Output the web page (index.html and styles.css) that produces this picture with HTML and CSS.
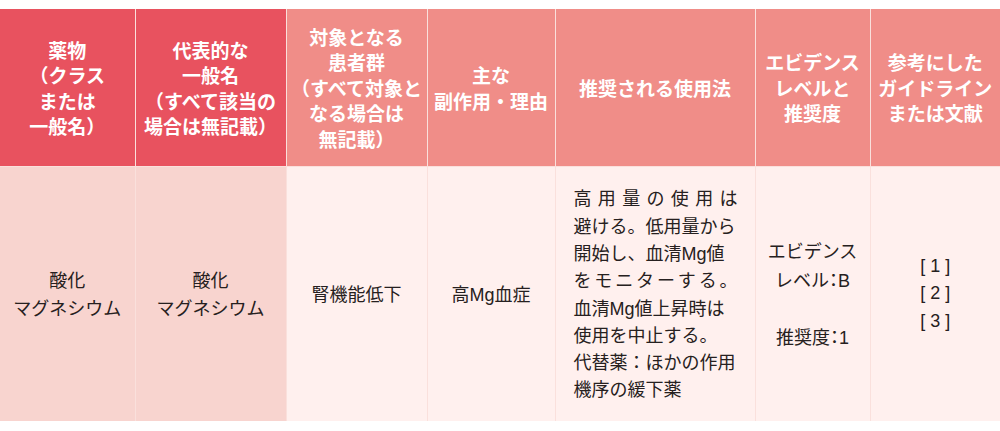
FILE: index.html
```html
<!DOCTYPE html>
<html lang="ja">
<head>
<meta charset="utf-8">
<link rel="stylesheet" href="styles.css">
</head>
<body>
<table class="drug-table">
  <colgroup>
    <col class="c1"><col class="c2"><col class="c3"><col class="c4"><col class="c5"><col class="c6"><col class="c7">
  </colgroup>
  <thead>
    <tr>
      <th class="h-strong">薬物<br>（クラス<br>または<br>一般名）</th>
      <th class="h-strong">代表的な<br>一般名<br>（すべて該当の<br>場合は無記載）</th>
      <th class="h-soft">対象となる<br>患者群<br>（すべて対象と<br>なる場合は<br>無記載）</th>
      <th class="h-soft">主な<br>副作用・理由</th>
      <th class="h-soft">推奨される使用法</th>
      <th class="h-soft">エビデンス<br>レベルと<br>推奨度</th>
      <th class="h-soft">参考にした<br>ガイドライン<br>または文献</th>
    </tr>
  </thead>
  <tbody>
    <tr>
      <td class="b-strong">酸化<br>マグネシウム</td>
      <td class="b-strong">酸化<br>マグネシウム</td>
      <td class="b-soft">腎機能低下</td>
      <td class="b-soft">高Mg血症</td>
      <td class="b-soft usage">
        <span class="ln spread">高用量の使用は</span>
        <span class="ln">避ける。低用量から</span>
        <span class="ln">開始し、血清Mg値</span>
        <span class="ln spread">をモニターする。</span>
        <span class="ln">血清Mg値上昇時は</span>
        <span class="ln">使用を中止する。</span>
        <span class="ln">代替薬：ほかの作用</span>
        <span class="ln">機序の緩下薬</span>
      </td>
      <td class="b-soft">エビデンス<br>レベル<span class="colon">：</span>B<br><br>推奨度<span class="colon">：</span>1</td>
      <td class="b-soft refs">[ 1 ]<br>[ 2 ]<br>[ 3 ]</td>
    </tr>
  </tbody>
</table>
</body>
</html>
```
FILE: styles.css
```css
html, body {
  margin: 0;
  padding: 0;
  background: #ffffff;
}
body {
  padding-top: 9px;
  font-family: "Noto Sans CJK JP", "Noto Sans", sans-serif;
}
.drug-table {
  width: 1000px;
  border-collapse: collapse;
  table-layout: fixed;
}
.c1 { width: 135px; }
.c2 { width: 151px; }
.c3 { width: 141px; }
.c4 { width: 128px; }
.c5 { width: 200px; }
.c6 { width: 115px; }
.c7 { width: 130px; }

.drug-table th,
.drug-table td {
  border: 1px solid #fae0dc;
  text-align: center;
  vertical-align: middle;
  padding: 0 2px;
}
.drug-table tr > :first-child { border-left: none; }
.drug-table tr > :last-child { border-right: none; }
.drug-table thead th { border-top: none; }
.drug-table tbody td { border-bottom: none; }

.drug-table th {
  height: 157px;
  color: #ffffff;
  font-size: 19px;
  font-weight: 700;
  line-height: 25.5px;
}
.h-strong { background: #e8525f; }
.h-soft { background: #f08d88; }

.drug-table td {
  height: 251px;
  padding-top: 3px;
  color: #262020;
  font-family: "Liberation Sans", "Noto Sans CJK JP", sans-serif;
  font-size: 18px;
  font-weight: 400;
  line-height: 27.3px;
}
.b-strong { background: #f8d4cf; }
.b-soft { background: #fff0ee; }

.drug-table td.usage {
  text-align: left;
  padding: 3px 17px 0 18px;
}
.drug-table td.refs {
  padding-top: 0;
}
.colon {
  font-family: "Noto Sans CJK JP", sans-serif;
  font-feature-settings: "palt" 1;
}
.ln {
  display: block;
  white-space: nowrap;
}
.ln.spread {
  text-align: justify;
  text-align-last: justify;
  white-space: normal;
}
```
